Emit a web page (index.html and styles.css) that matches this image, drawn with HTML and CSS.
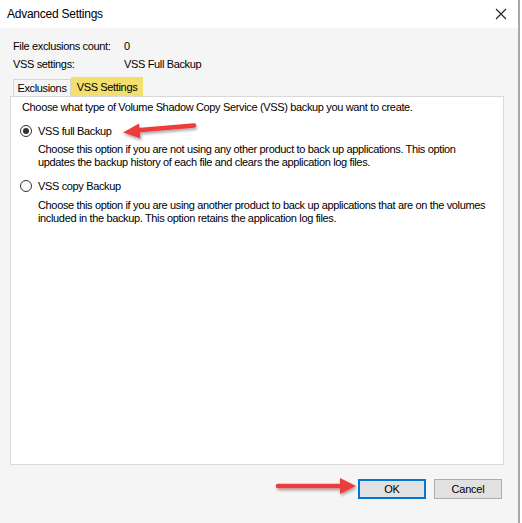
FILE: index.html
```html
<!DOCTYPE html>
<html>
<head>
<meta charset="utf-8">
<link rel="stylesheet" href="styles.css">
</head>
<body>
<div class="screen">
  <div class="window">
    <div class="titlebar">
      <span class="title">Advanced Settings</span>
      <svg class="close" width="12" height="12" viewBox="0 0 12 12"><path d="M1 1L11 11M11 1L1 11" stroke="#222" stroke-width="1.1" fill="none"/></svg>
    </div>
    <div class="content">
      <div class="info">
        <div class="row"><span class="lbl">File exclusions count:</span><span>0</span></div>
        <div class="row"><span class="lbl">VSS settings:</span><span>VSS Full Backup</span></div>
      </div>
      <div class="tabs">
        <div class="tab">Exclusions</div>
        <div class="tab active">VSS Settings</div>
      </div>
      <div class="panel">
        <p class="intro">Choose what type of Volume Shadow Copy Service (VSS) backup you want to create.</p>
        <div class="option">
          <div class="radio-row"><span class="radio checked"></span><span>VSS full Backup</span></div>
          <p class="desc">Choose this option if you are not using any other product to back up applications. This option<br>updates the backup history of each file and clears the application log files.</p>
        </div>
        <div class="option second">
          <div class="radio-row"><span class="radio"></span><span>VSS copy Backup</span></div>
          <p class="desc">Choose this option if you are using another product to back up applications that are on the volumes<br>included in the backup. This option retains the application log files.</p>
        </div>
      </div>
      <div class="buttons">
        <button class="btn primary">OK</button>
        <button class="btn">Cancel</button>
      </div>
    </div>
  </div>
  <div class="other"></div>

  <svg class="arrow arrow1" width="90" height="30" viewBox="0 0 90 30">
    <defs><filter id="sh1" x="-20%" y="-50%" width="140%" height="200%"><feDropShadow dx="1" dy="2" stdDeviation="1.5" flood-color="#000" flood-opacity="0.35"/></filter></defs>
    <g filter="url(#sh1)">
      <path d="M83 10.5 L27 15.2" stroke="#ee3b3b" stroke-width="4.5" stroke-linecap="round" fill="none"/>
      <path d="M12 17.5 L28 8.5 L29.5 23.5 Z" fill="#ee3b3b"/>
    </g>
  </svg>
  <svg class="arrow arrow2" width="100" height="30" viewBox="0 0 100 30">
    <defs><filter id="sh2" x="-20%" y="-50%" width="140%" height="200%"><feDropShadow dx="1" dy="2" stdDeviation="1.5" flood-color="#000" flood-opacity="0.35"/></filter></defs>
    <g filter="url(#sh2)">
      <path d="M8 14 L72 14" stroke="#ee3b3b" stroke-width="4.5" stroke-linecap="round" fill="none"/>
      <path d="M86 14 L70 6 L70 22 Z" fill="#ee3b3b"/>
    </g>
  </svg>
</div>
</body>
</html>
```

FILE: styles.css
```css
* { box-sizing: border-box; }
html, body { margin: 0; padding: 0; }
body {
  width: 522px;
  height: 523px;
  overflow: hidden;
  font-family: "Liberation Sans", Arial, sans-serif;
  font-size: 11px;
  letter-spacing: -0.35px;
  color: #000;
  background: #fff;
}
.screen {
  position: relative;
  display: flex;
  width: 522px;
  height: 523px;
}
.window {
  width: 520px;
  height: 523px;
  border-right: 2px solid #a9a9a9;
  display: flex;
  flex-direction: column;
  background: #f5f5f5;
}
.other {
  flex: 1;
  background: #fff;
}
.titlebar {
  height: 28px;
  background: #fff;
  display: flex;
  align-items: center;
  justify-content: space-between;
  padding: 0 11px 1px 7px;
  flex: none;
}
.title {
  font-size: 12px;
  letter-spacing: -0.25px;
  line-height: 14px;
}
.close { display: block; }
.content {
  flex: 1;
  padding: 9px 14px 0 10px;
  display: flex;
  flex-direction: column;
}
.info { padding-left: 3px; }
.row {
  display: flex;
  height: 18px;
  align-items: center;
}
.lbl { width: 111px; }
.tabs {
  display: flex;
  align-items: flex-end;
  margin-top: 4px;
  padding-left: 3px;
  height: 19px;
}
.tab {
  width: 58px;
  height: 17px;
  border: 1px solid #d6d6d6;
  border-bottom: none;
  background: #f5f5f5;
  display: flex;
  align-items: center;
  justify-content: center;
  line-height: 14px;
}
.tab.active {
  width: 72px;
  height: 19px;
  background: #f3df6e;
  border-color: #f3df6e;
}
.panel {
  height: 369px;
  background: #fff;
  border: 1px solid #d9d9d9;
  padding: 4px 11px 0 11px;
}
.intro {
  margin: 0;
  line-height: 13px;
  white-space: nowrap;
}
.option { margin-top: 9px; }
.option.second { margin-top: 9px; }
.radio-row {
  display: flex;
  align-items: center;
  height: 16px;
  margin-left: -2px;
}
.radio {
  width: 12px;
  height: 12px;
  border: 1px solid #333;
  border-radius: 50%;
  margin-right: 6px;
  display: flex;
  align-items: center;
  justify-content: center;
  background: #fff;
  flex: none;
}
.radio.checked::after {
  content: "";
  width: 6px;
  height: 6px;
  border-radius: 50%;
  background: #333;
}
.desc {
  margin: 4px 0 0 16px;
  line-height: 13px;
  white-space: nowrap;
}
.second .desc { margin-top: 5px; }
.buttons {
  display: flex;
  justify-content: flex-end;
  gap: 8px;
  margin-top: 14px;
  padding-right: 2px;
}
.btn {
  width: 68px;
  height: 20px;
  font-family: inherit;
  font-size: 11px;
  letter-spacing: -0.2px;
  background: #e1e1e1;
  border: 1px solid #adadad;
  padding: 0;
  color: #000;
}
.btn.primary {
  border: 2px solid #0078d7;
}
.arrow {
  position: absolute;
  overflow: visible;
}
.arrow1 { left: 111px; top: 115px; }
.arrow2 { left: 270px; top: 472px; }
```
